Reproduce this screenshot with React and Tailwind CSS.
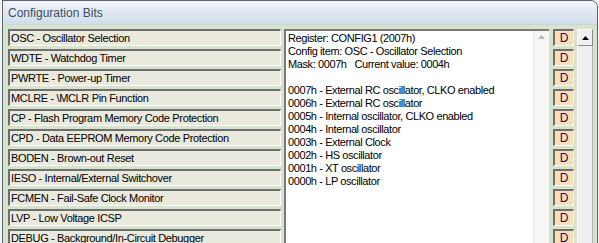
import React from "react";

const items = [
  "OSC - Oscillator Selection",
  "WDTE - Watchdog Timer",
  "PWRTE - Power-up Timer",
  "MCLRE - \\MCLR Pin Function",
  "CP - Flash Program Memory Code Protection",
  "CPD - Data EEPROM Memory Code Protection",
  "BODEN - Brown-out Reset",
  "IESO - Internal/External Switchover",
  "FCMEN - Fail-Safe Clock Monitor",
  "LVP - Low Voltage ICSP",
  "DEBUG - Background/In-Circuit Debugger",
];

const lines = [
  "Register: CONFIG1 (2007h)",
  "Config item: OSC - Oscillator Selection",
  "Mask: 0007h\u00a0\u00a0\u00a0Current value: 0004h",
  "\u00a0",
  "0007h - External RC oscillator, CLKO enabled",
  "0006h - External RC oscillator",
  "0005h - Internal oscillator, CLKO enabled",
  "0004h - Internal oscillator",
  "0003h - External Clock",
  "0002h - HS oscillator",
  "0001h - XT oscillator",
  "0000h - LP oscillator",
];

const font = { fontFamily: "Tahoma, 'Liberation Sans', Arial, sans-serif" };

export default function App() {
  return (
    <div
      className="w-[599px] h-[243px] overflow-hidden bg-[#f2f4f6] flex"
      style={font}
    >
      <div className="ml-[2px] w-[596px] h-[260px] border-l border-t border-r border-[#5d6670] rounded-tr-[7px] flex flex-col overflow-hidden">
        <div className="h-[24px] shrink-0 bg-gradient-to-b from-[#f0f4f8] to-[#d0deea] flex items-center pl-[5px] text-[12px] text-[#3e4c5b] border-b border-[#c9d6e2]">
          Configuration Bits
        </div>
        <div className="flex-1 bg-[#d7e4cc] flex pt-[4px] pl-[5px]">
          <div className="w-[273px] flex flex-col gap-[3px]">
            {items.map((t) => (
              <div
                key={t}
                className="h-[17px] shrink-0 bg-[#e9e9dd] border-t-2 border-l-2 border-t-[#6e6e6e] border-l-[#6e6e6e] border-b border-r border-b-white border-r-white flex items-center pl-[1px] text-[11px] leading-none text-black tracking-[-0.35px] whitespace-nowrap overflow-hidden"
              >
                {t}
              </div>
            ))}
          </div>
          <div className="ml-[3px] w-[265px] h-[240px] bg-white border-t-2 border-l-2 border-t-[#7a7a7a] border-l-[#7a7a7a] flex">
            <div className="flex-1 pl-[2px] pt-[1px] text-[11px] leading-[13px] text-black tracking-[-0.4px] whitespace-nowrap overflow-hidden">
              {lines.map((l, i) => (
                <div key={i}>{l}</div>
              ))}
            </div>
            <div className="w-[16px] bg-[#f6f6f6] border-l border-[#eaeaea] flex justify-center pt-[4px]">
              <svg width="7" height="4" viewBox="0 0 7 4">
                <polygon points="0,4 7,4 3.5,0" fill="#b8b8b8" />
              </svg>
            </div>
          </div>
          <div className="ml-[4px] w-[21px] flex flex-col gap-[3px]">
            {items.map((t) => (
              <div
                key={t}
                className="h-[17px] shrink-0 bg-[#ffdcb8] border-t-2 border-l-2 border-t-[#6e6e6e] border-l-[#6e6e6e] border-b border-r border-b-white border-r-white flex items-center justify-center text-[12px] leading-none text-[#101050]"
              >
                D
              </div>
            ))}
          </div>
          <div className="ml-[3px] w-[16px] flex flex-col">
            <div className="h-[17px] bg-[#f0f0f0] border border-t-white border-l-white border-b-[#8a8a8a] border-r-[#8a8a8a] flex items-center justify-center">
              <svg width="7" height="4" viewBox="0 0 7 4">
                <polygon points="0,4 7,4 3.5,0" fill="#000" />
              </svg>
            </div>
            <div className="flex-1 bg-[#eeeeee] border-l border-white border-r border-r-[#b5b5b5]"></div>
          </div>
        </div>
      </div>
    </div>
  );
}
